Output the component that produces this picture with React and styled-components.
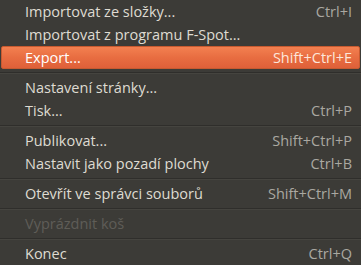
import styled, { createGlobalStyle } from "styled-components";

const Global = createGlobalStyle`
  html, body {
    margin: 0;
    padding: 0;
    background: #3c3b37;
  }
`;

const items = [
  { label: "Importovat ze složky...", key: "Ctrl+I" },
  { label: "Importovat z programu F-Spot..." },
  { label: "Export...", key: "Shift+Ctrl+E", active: true },
  "sep",
  { label: "Nastavení stránky..." },
  { label: "Tisk...", key: "Ctrl+P" },
  "sep",
  { label: "Publikovat...", key: "Shift+Ctrl+P" },
  { label: "Nastavit jako pozadí plochy", key: "Ctrl+B" },
  "sep",
  { label: "Otevřít ve správci souborů", key: "Shift+Ctrl+M" },
  "sep",
  { label: "Vyprázdnit koš", disabled: true },
  "sep",
  { label: "Konec", key: "Ctrl+Q" },
];

export default function App() {
  return (
    <>
      <Global />
      <Menu>
        {items.map((it, i) =>
          it === "sep" ? (
            <Separator key={i} />
          ) : (
            <Item key={i} $active={it.active} $disabled={it.disabled}>
              <Label>{it.label}</Label>
              {it.key && <Shortcut $active={it.active}>{it.key}</Shortcut>}
            </Item>
          )
        )}
      </Menu>
    </>
  );
}

const Menu = styled.div`
  width: 361px;
  height: 265px;
  background: #3c3b37;
  display: flex;
  flex-direction: column;
  font-family: "Open Sans", "Noto Sans", sans-serif;
  font-size: 14.5px;
  overflow: hidden;
`;

const Item = styled.div`
  height: 23px;
  flex-shrink: 0;
  display: flex;
  align-items: center;
  justify-content: space-between;
  margin: 0 1px;
  padding: 0 7px 0 23px;
  box-sizing: border-box;
  color: ${(p) => (p.$disabled ? "#5f5d57" : p.$active ? "#ffffff" : "#dfdbd2")};
  background: ${(p) =>
    p.$active ? "linear-gradient(#f38050, #e86d41 50%, #df6039)" : "transparent"};
  border: 1px solid ${(p) => (p.$active ? "#c75a30" : "transparent")};
  border-radius: ${(p) => (p.$active ? "2px" : "0")};
`;

const Label = styled.span`
  white-space: nowrap;
`;

const Shortcut = styled.span`
  white-space: nowrap;
  color: ${(p) => (p.$active ? "#fde6da" : "#aaa8a1")};
`;

const Separator = styled.div`
  height: 7px;
  flex-shrink: 0;
  display: flex;
  align-items: center;
  &::before {
    content: "";
    flex: 1;
    height: 1px;
    background: #2f2e2b;
    box-shadow: 0 1px 0 #45443f;
  }
`;
